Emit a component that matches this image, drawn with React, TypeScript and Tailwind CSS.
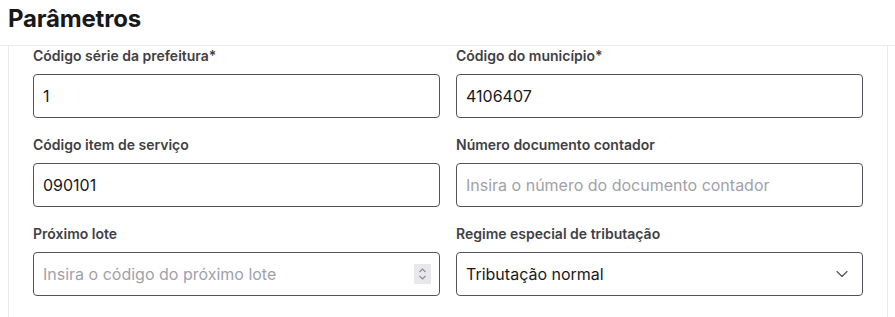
import { ChevronDown } from "lucide-react"

const font = { fontFamily: "Inter, 'Noto Sans', sans-serif" }

function Label({ children }: { children: React.ReactNode }) {
  return <label className="block text-sm leading-5 font-semibold text-[#3f3f46] mb-2">{children}</label>
}

function TextField({ label, value, placeholder }: { label: string; value?: string; placeholder?: string }) {
  return (
    <div>
      <Label>{label}</Label>
      <input
        readOnly
        value={value ?? ""}
        placeholder={placeholder}
        className="w-full h-11 rounded border border-[#52525b] bg-white px-[9px] text-base text-[#18181b] placeholder:text-[#a1a1aa] outline-none"
      />
    </div>
  )
}

export default function App() {
  return (
    <div style={font} className="w-[895px] h-[317px] bg-white overflow-hidden">
      {/* Header */}
      <div className="h-[46px] border-b border-[#ebebeb] px-2">
        <h1 className="text-2xl leading-[37px] font-bold text-[#18181b] tracking-[-0.2px]">Parâmetros</h1>
      </div>

      <div className="px-2">
        <div className="w-[880px] h-[300px] border-x border-[#ebebeb] px-6">
          <div className="grid grid-cols-2 gap-x-4 gap-y-[17px]">
            <TextField label="Código série da prefeitura*" value="1" />
            <TextField label="Código do município*" value="4106407" />
            <TextField label="Código item de serviço" value="090101" />
            <TextField label="Número documento contador" placeholder="Insira o número do documento contador" />

            {/* Próximo lote (number) */}
            <div>
              <Label>Próximo lote</Label>
              <div className="relative">
                <input
                  readOnly
                  placeholder="Insira o código do próximo lote"
                  className="w-full h-11 rounded border border-[#52525b] bg-white px-[9px] text-base text-[#18181b] placeholder:text-[#a1a1aa] outline-none"
                />
                <div className="absolute right-[9px] top-[12px] w-[17px] h-[20px] bg-[#e8e8ec] flex flex-col items-center justify-center">
                  <svg width="9" height="14" viewBox="0 0 9 14" fill="none" stroke="#8a8a94" strokeWidth="1.1">
                    <path d="M1.5 5 L4.5 2 L7.5 5" />
                    <path d="M1.5 9 L4.5 12 L7.5 9" />
                  </svg>
                </div>
              </div>
            </div>

            {/* Regime especial (select) */}
            <div>
              <Label>Regime especial de tributação</Label>
              <div className="w-full h-11 rounded border border-[#52525b] bg-white pl-[9px] pr-[10px] flex items-center justify-between">
                <span className="text-base text-[#18181b]">Tributação normal</span>
                <ChevronDown className="w-5 h-5 text-[#52525b]" strokeWidth={1.4} />
              </div>
            </div>
          </div>
        </div>
      </div>
    </div>
  )
}
